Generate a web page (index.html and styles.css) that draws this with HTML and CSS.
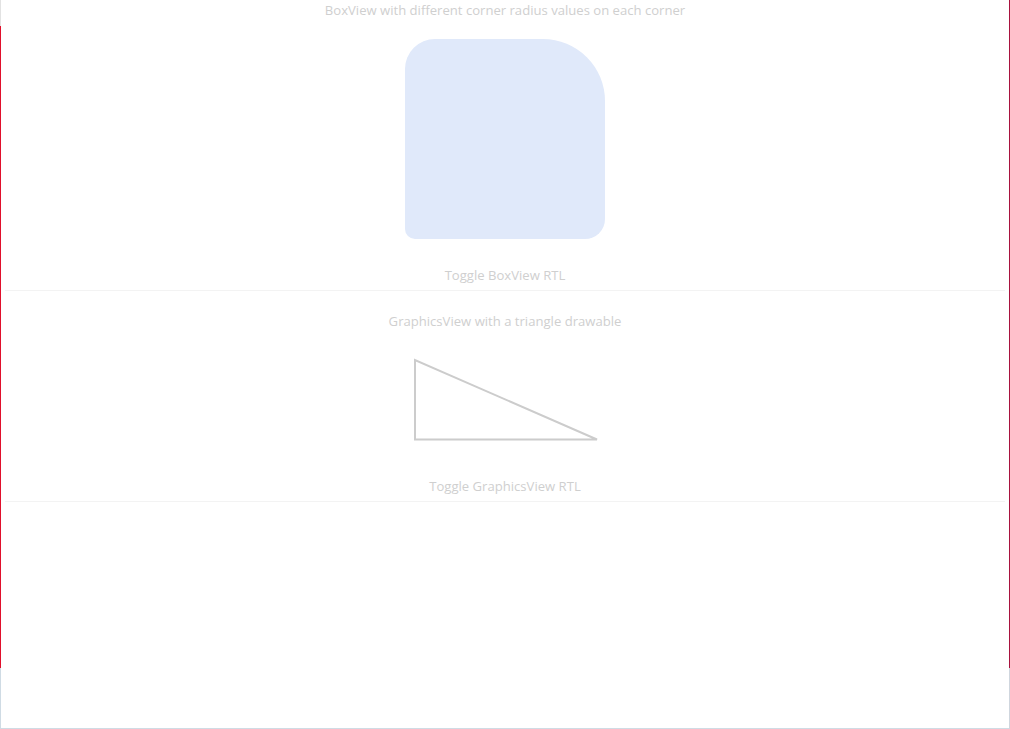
FILE: index.html
```html
<!DOCTYPE html>
<html>
<head>
<meta charset="utf-8">
<link rel="stylesheet" href="styles.css">
</head>
<body>
<div class="window">
  <div class="main">
    <div class="edge-left"><div class="edge-top"></div><div class="edge-red"></div></div>
    <div class="content">
      <section class="section first">
        <div class="label">BoxView with different corner radius values on each corner</div>
        <div class="boxview"></div>
        <div class="toggle">Toggle BoxView RTL</div>
      </section>
      <section class="section second">
        <div class="label">GraphicsView with a triangle drawable</div>
        <svg class="graphics" width="200" height="100" viewBox="0 0 200 100">
          <polygon points="10,10 10,89.5 192,89.5" fill="none" stroke="#cccccc" stroke-width="2"/>
        </svg>
        <div class="toggle">Toggle GraphicsView RTL</div>
      </section>
    </div>
    <div class="edge-right"></div>
  </div>
  <div class="footer"></div>
</div>
</body>
</html>
```
FILE: styles.css
```css
html, body {
  margin: 0;
  padding: 0;
  background: #ffffff;
}
.window {
  width: 1010px;
  height: 729px;
  display: flex;
  flex-direction: column;
  font-family: "Open Sans", "Noto Sans", sans-serif;
  font-size: 13.1px;
  color: #cfcfcf;
}
.main {
  height: 668px;
  display: flex;
}
.edge-left {
  width: 1px;
  display: flex;
  flex-direction: column;
}
.edge-top {
  height: 26px;
  background: #e2e2e2;
}
.edge-red {
  flex: 1;
  background: #e0102c;
}
.edge-right {
  width: 1px;
  background: #a8123e;
}
.content {
  flex: 1;
  display: flex;
  flex-direction: column;
  padding: 0 4px;
}
.section {
  display: flex;
  flex-direction: column;
  align-items: center;
  border-bottom: 1px solid #f3f3f3;
}
.label, .toggle {
  height: 20px;
  line-height: 21px;
  text-align: center;
  white-space: nowrap;
}
.first {
  height: 290px;
}
.first .boxview {
  margin-top: 19px;
  width: 200px;
  height: 200px;
  background: #e0e9fa;
  border-radius: 30px 62px 20px 10px;
}
.first .toggle {
  margin-top: 26px;
}
.second {
  height: 211px;
  padding-top: 20px;
  box-sizing: border-box;
}
.second .graphics {
  margin-top: 19px;
  display: block;
}
.second .toggle {
  margin-top: 26px;
}
.footer {
  flex: 1;
  border-left: 1px solid #cfdbe4;
  border-right: 1px solid #cfd6de;
  border-bottom: 1px solid #cfdbe4;
}
```
